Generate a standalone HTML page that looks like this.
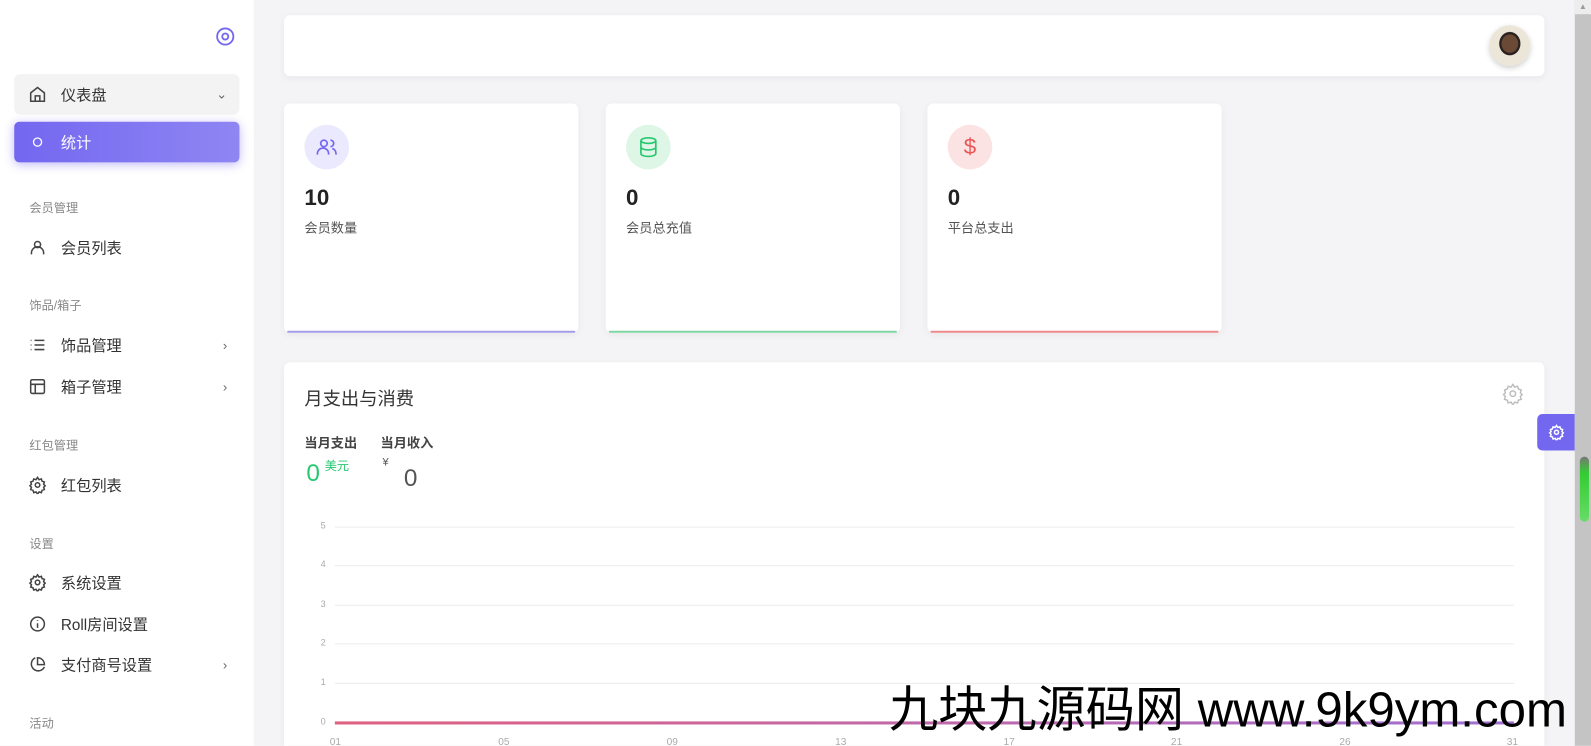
<!DOCTYPE html>
<html><head><meta charset="utf-8"><style>
*{box-sizing:border-box;margin:0;padding:0}
html,body{width:1591px;height:746px;overflow:hidden;background:#f4f4f6}
#clip{position:relative;width:1591px;height:746px;overflow:hidden}
#w{position:absolute;left:0;top:0;width:1568px;height:735px;transform:scale(1.01467);transform-origin:0 0;font-family:"Liberation Sans","Noto Sans CJK SC",sans-serif;color:#333}
.sb{position:absolute;left:0;top:0;width:250px;height:735px;background:#fff}
.item{position:absolute;left:14px;width:222px;height:40px;display:flex;align-items:center;font-size:15px;color:#333}
.item svg{position:absolute;left:14px}
.item span{position:absolute;left:46px}
.item .ar{left:auto;right:12px;color:#666;font-size:13px}
.hd{position:absolute;left:29px;font-size:12px;color:#888}
.card{position:absolute;background:#fff;border-radius:6px;box-shadow:0 2px 8px rgba(0,0,0,.05)}
.num{position:absolute;left:20px;top:80px;font-size:22px;font-weight:bold;color:#222}
.lbl{position:absolute;left:20px;top:112px;font-size:13px;color:#555}
.ic{position:absolute;left:20px;top:21px;width:44px;height:44px;border-radius:50%;display:flex;align-items:center;justify-content:center}
.bar{position:absolute;left:3px;right:3px;bottom:0;height:2px;border-radius:1px}
.yl{position:absolute;left:316px;font-size:9px;color:#aaa}
.gl{position:absolute;left:330px;width:1162px;height:1px;background:#ececec}
.xl{position:absolute;top:726px;font-size:10px;color:#aaa}
</style></head><body><div id="clip"><div id="w">
<div class="sb">
 <svg style="position:absolute;left:212px;top:26px" width="20" height="20" viewBox="0 0 20 20"><circle cx="10" cy="10" r="8" fill="none" stroke="#7367f0" stroke-width="1.8"/><circle cx="10" cy="10" r="3" fill="none" stroke="#7367f0" stroke-width="1.8"/></svg>
 <div class="item" style="top:73px;background:#f3f3f3;border-radius:6px"><svg width="18" height="18" viewBox="0 0 24 24" fill="none" stroke="#444" stroke-width="2"><path d="M3 10l9-7 9 7v11H3z"/><path d="M9 21v-7h6v7"/></svg><span>仪表盘</span><span class="ar">⌄</span></div>
 <div class="item" style="top:120px;background:linear-gradient(90deg,#7367f0,#8f86f3);border-radius:5px;box-shadow:0 2px 10px rgba(115,103,240,.45);color:#fff"><svg width="12" height="12" viewBox="0 0 12 12" style="left:17px"><circle cx="6" cy="6" r="4" fill="none" stroke="#fff" stroke-width="1.3"/></svg><span>统计</span></div>
 <div class="hd" style="top:196px">会员管理</div>
 <div class="item" style="top:224px"><svg width="18" height="18" viewBox="0 0 24 24" fill="none" stroke="#444" stroke-width="2"><circle cx="12" cy="8" r="4"/><path d="M4 21v-2a6 6 0 0 1 16 0v2"/></svg><span>会员列表</span></div>
 <div class="hd" style="top:292px">饰品/箱子</div>
 <div class="item" style="top:320px"><svg width="18" height="18" viewBox="0 0 24 24" fill="none" stroke="#444" stroke-width="2"><path d="M8 6h13M8 12h13M8 18h13M3 6h1M3 12h1M3 18h1"/></svg><span>饰品管理</span><span class="ar">›</span></div>
 <div class="item" style="top:361px"><svg width="18" height="18" viewBox="0 0 24 24" fill="none" stroke="#444" stroke-width="2"><rect x="3" y="3" width="18" height="18" rx="2"/><path d="M3 9h18M9 21V9"/></svg><span>箱子管理</span><span class="ar">›</span></div>
 <div class="hd" style="top:430px">红包管理</div>
 <div class="item" style="top:458px"><svg width="18" height="18" viewBox="0 0 24 24" fill="none" stroke="#444" stroke-width="2"><circle cx="12" cy="12" r="3"/><path d="M12 2l2 3 3-1 1 3 3 1-1 3 2 2-2 2 1 3-3 1-1 3-3-1-2 3-2-3-3 1-1-3-3-1 1-3-2-2 2-2-1-3 3-1 1-3 3 1z"/></svg><span>红包列表</span></div>
 <div class="hd" style="top:527px">设置</div>
 <div class="item" style="top:554px"><svg width="18" height="18" viewBox="0 0 24 24" fill="none" stroke="#444" stroke-width="2"><circle cx="12" cy="12" r="3"/><path d="M12 2l2 3 3-1 1 3 3 1-1 3 2 2-2 2 1 3-3 1-1 3-3-1-2 3-2-3-3 1-1-3-3-1 1-3-2-2 2-2-1-3 3-1 1-3 3 1z"/></svg><span>系统设置</span></div>
 <div class="item" style="top:595px"><svg width="18" height="18" viewBox="0 0 24 24" fill="none" stroke="#444" stroke-width="2"><circle cx="12" cy="12" r="9"/><path d="M12 11v6M12 7v1"/></svg><span>Roll房间设置</span></div>
 <div class="item" style="top:635px"><svg width="18" height="18" viewBox="0 0 24 24" fill="none" stroke="#444" stroke-width="2"><path d="M21 15A9 9 0 1 1 9 3"/><path d="M21 12A9 9 0 0 0 12 3v9z"/></svg><span>支付商号设置</span><span class="ar">›</span></div>
 <div class="hd" style="top:704px">活动</div>
</div>

<div class="card" style="left:280px;top:15px;width:1242px;height:60px">
 <div style="position:absolute;right:14px;top:10px;width:40px;height:40px;border-radius:50%;background:radial-gradient(ellipse at 50% 45%,#6a4a35 0 28%,#2a2220 30% 36%,#ece6d8 38%);box-shadow:0 2px 6px rgba(0,0,0,.2)"></div>
</div>

<div class="card" style="left:280px;top:102px;width:290px;height:226px">
 <div class="ic" style="background:#ebe9fd"><svg width="22" height="22" viewBox="0 0 24 24" fill="none" stroke="#7367f0" stroke-width="1.8"><circle cx="9" cy="8" r="3.5"/><path d="M2 20v-1a6 6 0 0 1 12 0v1M16 4.5a3.5 3.5 0 0 1 0 7M22 20v-1a6 6 0 0 0-4-5.6"/></svg></div>
 <div class="num">10</div><div class="lbl">会员数量</div><div class="bar" style="background:#a39ce6"></div></div>
<div class="card" style="left:597px;top:102px;width:290px;height:226px">
 <div class="ic" style="background:#ddf6e6"><svg width="22" height="22" viewBox="0 0 24 24" fill="none" stroke="#28c76f" stroke-width="1.8"><ellipse cx="12" cy="5" rx="8" ry="3"/><path d="M4 5v14c0 1.7 3.6 3 8 3s8-1.3 8-3V5M4 12c0 1.7 3.6 3 8 3s8-1.3 8-3"/></svg></div>
 <div class="num">0</div><div class="lbl">会员总充值</div><div class="bar" style="background:#7fd6a2"></div></div>
<div class="card" style="left:914px;top:102px;width:290px;height:226px">
 <div class="ic" style="background:#fbe3e3"><span style="color:#ea5455;font-size:22px">$</span></div>
 <div class="num">0</div><div class="lbl">平台总支出</div><div class="bar" style="background:#ee8a8a"></div></div>

<div class="card" style="left:280px;top:357px;width:1242px;height:378px;border-radius:6px 6px 0 0">
 <div style="position:absolute;left:20px;top:22px;font-size:18px;color:#333">月支出与消费</div>
 <svg style="position:absolute;right:20px;top:20px" width="22" height="22" viewBox="0 0 24 24" fill="none" stroke="#bbb" stroke-width="1.5"><circle cx="12" cy="12" r="3"/><path d="M12 2l2 3 3-1 1 3 3 1-1 3 2 2-2 2 1 3-3 1-1 3-3-1-2 3-2-3-3 1-1-3-3-1 1-3-2-2 2-2-1-3 3-1 1-3 3 1z"/></svg>
 <div style="position:absolute;left:20px;top:69px;font-size:13px;font-weight:bold;color:#444">当月支出</div>
 <div style="position:absolute;left:95px;top:69px;font-size:13px;font-weight:bold;color:#444">当月收入</div>
 <div style="position:absolute;left:22px;top:96px;font-size:24px;color:#28c76f">0</div>
 <div style="position:absolute;left:40px;top:93px;font-size:12px;color:#28c76f">美元</div>
 <div style="position:absolute;left:97px;top:93px;font-size:11px;color:#555">¥</div>
 <div style="position:absolute;left:118px;top:101px;font-size:24px;color:#555">0</div>
</div>
<div class="gl" style="top:519px"></div><div class="yl" style="top:513px">5</div>
<div class="gl" style="top:557px"></div><div class="yl" style="top:551px">4</div>
<div class="gl" style="top:596px"></div><div class="yl" style="top:590px">3</div>
<div class="gl" style="top:634px"></div><div class="yl" style="top:628px">2</div>
<div class="gl" style="top:673px"></div><div class="yl" style="top:667px">1</div>
<div class="yl" style="top:706px">0</div>
<div style="position:absolute;left:330px;top:711px;width:1162px;height:3px;background:linear-gradient(90deg,#e06080,#a070d0)"></div>
<div class="xl" style="left:325px">01</div><div class="xl" style="left:491px">05</div><div class="xl" style="left:657px">09</div><div class="xl" style="left:823px">13</div><div class="xl" style="left:989px">17</div><div class="xl" style="left:1154px">21</div><div class="xl" style="left:1320px">26</div><div class="xl" style="left:1485px">31</div>

<div style="position:absolute;left:1515px;top:408px;width:37px;height:36px;background:#7367f0;border-radius:5px 0 0 5px;display:flex;align-items:center;justify-content:center"><svg width="16" height="16" viewBox="0 0 24 24" fill="none" stroke="#fff" stroke-width="2.2"><circle cx="12" cy="12" r="3"/><path d="M12 2l2 3 3-1 1 3 3 1-1 3 2 2-2 2 1 3-3 1-1 3-3-1-2 3-2-3-3 1-1-3-3-1 1-3-2-2 2-2-1-3 3-1 1-3 3 1z"/></svg></div>

<div style="position:absolute;left:1552px;top:0;width:16px;height:735px;background:#c4c4c4"></div>
<div style="position:absolute;left:1552px;top:0;width:16px;height:14px;background:#ededed;color:#999;font-size:8px;text-align:center;line-height:14px">▲</div>
<div style="position:absolute;left:1557px;top:450px;width:9px;height:64px;border-radius:5px;background:linear-gradient(#777,#3c3 25%,#6d6)"></div>

<div style="position:absolute;left:876px;top:660px;font-size:48.5px;color:#000;white-space:nowrap">九块九源码网 www.9k9ym.com</div>
</div></div></body></html>
